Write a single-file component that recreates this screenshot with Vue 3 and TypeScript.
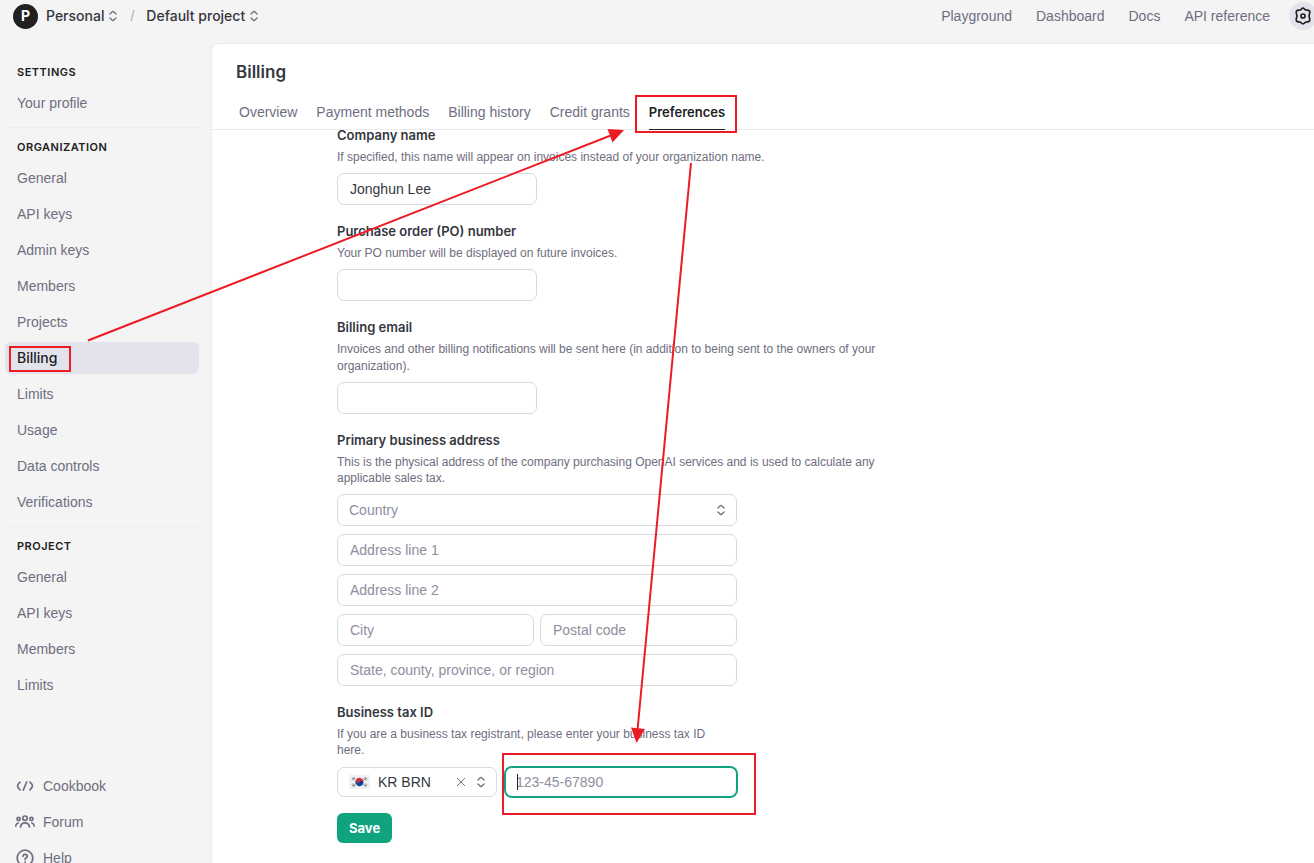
<script setup lang="ts">
import { ref } from 'vue'

interface NavSection {
  title: string
  items: string[]
}

const sections: NavSection[] = [
  { title: 'SETTINGS', items: ['Your profile'] },
  {
    title: 'ORGANIZATION',
    items: [
      'General', 'API keys', 'Admin keys', 'Members', 'Projects',
      'Billing', 'Limits', 'Usage', 'Data controls', 'Verifications',
    ],
  },
  { title: 'PROJECT', items: ['General', 'API keys', 'Members', 'Limits'] },
]

const topLinks: string[] = ['Playground', 'Dashboard', 'Docs', 'API reference']
const tabs: string[] = ['Overview', 'Payment methods', 'Billing history', 'Credit grants', 'Preferences']

const activeTab = ref('Preferences')
const company = ref('Jonghun Lee')
const poNumber = ref('')
const email = ref('')
const country = ref('')
const line1 = ref('')
const line2 = ref('')
const city = ref('')
const postal = ref('')
const region = ref('')
const taxType = ref('KR BRN')
const taxId = ref('')
</script>

<template>
  <div class="page">
    <header class="topbar">
      <span class="avatar">P</span>
      <button type="button" class="crumb">
        Personal
        <svg class="chev" viewBox="0 0 10 14"><path d="M2 5 4.300 2.700Q5 2 5.700 2.700L8 5M2 9 4.300 11.300Q5 12 5.700 11.300L8 9" /></svg>
      </button>
      <span class="slash">/</span>
      <button type="button" class="crumb">
        Default project
        <svg class="chev" viewBox="0 0 10 14"><path d="M2 5 4.300 2.700Q5 2 5.700 2.700L8 5M2 9 4.300 11.300Q5 12 5.700 11.300L8 9" /></svg>
      </button>
      <nav class="toplinks">
        <a v-for="link in topLinks" :key="link" href="#">{{ link }}</a>
      </nav>
      <button type="button" class="gear" aria-label="Settings">
        <svg viewBox="0 0 20 20">
          <path d="M8.500 3Q10 1.300 11.500 3Q12.600 4.400 14.300 4.200Q16.500 4 16.800 6.200Q16.900 7 16.500 7.800Q15.600 10 16.500 12.200Q16.900 13 16.800 13.800Q16.500 16 14.300 15.800Q12.600 15.600 11.500 17Q10 18.700 8.500 17Q7.400 15.600 5.700 15.800Q3.500 16 3.200 13.800Q3.100 13 3.500 12.200Q4.400 10 3.500 7.800Q3.100 7 3.200 6.200Q3.500 4 5.700 4.200Q7.400 4.400 8.500 3Z" />
          <circle cx="10" cy="10" r="2" />
        </svg>
      </button>
    </header>

    <div class="body">
      <aside class="sidebar">
        <section v-for="section in sections" :key="section.title" class="group">
          <h2>{{ section.title }}</h2>
          <nav>
            <a
              v-for="item in section.items"
              :key="item"
              href="#"
              :class="{ active: item === 'Billing' }"
            >{{ item }}</a>
          </nav>
        </section>
        <nav class="resources">
          <a href="#">
            <svg viewBox="0 0 20 20"><path d="M5 6.200Q2.500 8.500 2.500 10T5 13.800M15 6.200Q17.500 8.500 17.500 10T15 13.800M11.700 6 8.300 14" /></svg>
            Cookbook
          </a>
          <a href="#">
            <svg viewBox="0 0 20 20">
              <circle cx="10" cy="6.200" r="2.200" /><circle cx="3.600" cy="7" r="1.600" /><circle cx="16.400" cy="7" r="1.600" />
              <path d="M5.500 15c.4-2.600 2.100-4.200 4.500-4.200s4.100 1.600 4.500 4.200M.8 14c.1-1.600.9-2.800 2.400-3M19.200 14c-.1-1.600-.9-2.800-2.400-3" />
            </svg>
            Forum
          </a>
          <a href="#">
            <svg viewBox="0 0 20 20">
              <circle cx="10" cy="10" r="7.800" />
              <path d="M8 8.300c0-2.700 4.200-2.500 4.200 0 0 1.500-2.100 1.500-2.100 3.100M10.100 13.800v.2" />
            </svg>
            Help
          </a>
        </nav>
      </aside>

      <main class="panel">
        <div class="panel-head">
          <h1>Billing</h1>
          <div class="tabs" role="tablist">
            <button
              v-for="tab in tabs"
              :key="tab"
              type="button"
              role="tab"
              :aria-selected="tab === activeTab"
              :class="{ current: tab === activeTab }"
              @click="activeTab = tab"
            >{{ tab }}</button>
          </div>
        </div>

        <div class="scroll">
          <form class="form" @submit.prevent>
            <div class="field">
              <label for="company">Company name</label>
              <p>If specified, this name will appear on invoices instead of your organization name.</p>
              <input id="company" v-model="company" class="box short" type="text" />
            </div>
            <div class="field">
              <label for="po">Purchase order (PO) number</label>
              <p>Your PO number will be displayed on future invoices.</p>
              <input id="po" v-model="poNumber" class="box short" type="text" />
            </div>
            <div class="field">
              <label for="email">Billing email</label>
              <p>Invoices and other billing notifications will be sent here (in addition to being sent to the owners of your organization).</p>
              <input id="email" v-model="email" class="box short" type="email" />
            </div>
            <div class="field compact">
              <label for="country">Primary business address</label>
              <p>This is the physical address of the company purchasing OpenAI services and is used to calculate any applicable sales tax.</p>
              <div class="address">
                <div class="box picker">
                  <select id="country" v-model="country" class="empty">
                    <option value="">Country</option>
                  </select>
                  <svg class="chev" viewBox="0 0 10 14"><path d="M2 5 4.300 2.700Q5 2 5.700 2.700L8 5M2 9 4.300 11.300Q5 12 5.700 11.300L8 9" /></svg>
                </div>
                <input v-model="line1" class="box" type="text" placeholder="Address line 1" aria-label="Address line 1" />
                <input v-model="line2" class="box" type="text" placeholder="Address line 2" aria-label="Address line 2" />
                <div class="pair">
                  <input v-model="city" class="box" type="text" placeholder="City" aria-label="City" />
                  <input v-model="postal" class="box" type="text" placeholder="Postal code" aria-label="Postal code" />
                </div>
                <input v-model="region" class="box" type="text" placeholder="State, county, province, or region" aria-label="State, county, province, or region" />
              </div>
            </div>
            <div class="field compact tax">
              <label for="taxid">Business tax ID</label>
              <p>If you are a business tax registrant, please enter your business tax ID here.</p>
              <div class="taxrow">
                <div class="box picker type">
                  <svg class="flag" viewBox="0 0 21 14">
                    <rect width="21" height="14" fill="#f1f1f3" />
                    <g transform="rotate(25 10.500 7)">
                      <path d="M6.500 7a4 4 0 0 1 8 0z" fill="#cd2e3a" />
                      <path d="M6.500 7a4 4 0 0 0 8 0z" fill="#0047a0" />
                      <circle cx="8.500" cy="7" r="2" fill="#cd2e3a" />
                      <circle cx="12.500" cy="7" r="2" fill="#0047a0" />
                    </g>
                    <path d="M3 4.300 5 2.300M4.300 5.300l1.800-2M16 2.300l2 2M14.900 3.300l1.800 2M3 9.700l2 2M4.300 8.700l1.800 2M16 11.700l2-2M14.900 10.700l1.800-2" stroke="#333" stroke-width=".9" />
                  </svg>
                  <select v-model="taxType" aria-label="Tax ID type">
                    <option value="KR BRN">KR BRN</option>
                    <option value=""></option>
                  </select>
                  <button type="button" class="clear" aria-label="Clear" @click="taxType = ''">
                    <svg viewBox="0 0 10 10"><path d="M1 1l8 8M9 1 1 9" /></svg>
                  </button>
                  <svg class="chev" viewBox="0 0 10 14"><path d="M2 5 4.300 2.700Q5 2 5.700 2.700L8 5M2 9 4.300 11.300Q5 12 5.700 11.300L8 9" /></svg>
                </div>
                <div class="idwrap">
                  <input id="taxid" v-model="taxId" class="box focused" type="text" placeholder="123-45-67890" />
                  <span class="caret"></span>
                </div>
              </div>
            </div>
            <button type="submit" class="save">Save</button>
          </form>
        </div>
      </main>
    </div>

    <svg class="marks" aria-hidden="true">
      <g fill="none" stroke="#ed1c24" stroke-width="2">
        <rect x="10" y="347" width="60" height="24" />
        <rect x="636" y="96" width="100" height="36" />
        <rect x="503" y="754" width="252" height="60" />
        <path d="M88 340.500 612 135M691 163 637.500 730" />
      </g>
      <path d="M624 130 607.500 129 612.500 142.500ZM636.500 743 631 727.500 645 729Z" fill="#ed1c24" />
    </svg>
  </div>
</template>

<style>
body {
  background: #f4f4f4;
}
</style>

<style scoped>
.page {
  position: relative;
  display: flex;
  flex-direction: column;
  height: 100vh;
  overflow: hidden;
  background: #f4f4f4;
  color: #353740;
  font: 14px/20px "Liberation Sans", Arial, sans-serif;
}
.page * {
  box-sizing: border-box;
}
button, input, select {
  font: inherit;
  color: inherit;
}
button {
  padding: 0;
  border: 0;
  background: none;
}
a {
  color: #6e6e80;
  text-decoration: none;
}
svg {
  flex: none;
  fill: none;
}
.topbar {
  display: flex;
  align-items: center;
  flex: none;
  height: 43px;
  padding: 0 0 11px 13px;
}
.avatar {
  width: 25px;
  height: 25px;
  margin-right: 8px;
  border-radius: 50%;
  background: #202123;
  color: #fff;
  font-family: Inter, sans-serif;
  font-weight: 700;
  line-height: 24px;
  text-align: center;
}
.crumb {
  display: flex;
  align-items: center;
  gap: 4px;
  font-family: Inter, sans-serif;
  font-weight: 500;
}
.chev {
  width: 10px;
  height: 14px;
  stroke: #6e6e80;
  stroke-width: 1.3;
  stroke-linecap: round;
  stroke-linejoin: round;
}
.slash {
  margin: 0 12px;
  color: #acacbe;
}
.toplinks {
  display: flex;
  gap: 24px;
  margin-left: auto;
}
.gear {
  display: grid;
  place-items: center;
  width: 28px;
  height: 28px;
  margin: 0 -3px 0 19px;
  border-radius: 50%;
  background: #e3e3ec;
}
.gear svg {
  width: 20px;
  height: 20px;
  stroke: #202123;
  stroke-width: 1.7;
}
.body {
  display: flex;
  flex: 1;
  min-height: 0;
}
.sidebar {
  width: 211px;
  flex: none;
  padding: 3px 12px 0 5px;
}
.group {
  padding: 11px 0 8px;
  border-top: 1px solid #ececf1;
}
.group:first-child {
  padding-top: 17px;
  border-top-color: #f1f1f2;
}
.group h2 {
  margin: 0 0 7px;
  padding-left: 12px;
  color: #202123;
  font-family: Inter, sans-serif;
  font-size: 11px;
  font-weight: 600;
  line-height: 16px;
  letter-spacing: 0.5px;
}
.sidebar nav {
  display: flex;
  flex-direction: column;
  gap: 4px;
}
.sidebar nav a {
  display: flex;
  align-items: center;
  height: 32px;
  padding: 0 12px;
  border-radius: 6px;
}
.sidebar nav a.active {
  background: #e3e3ec;
  color: #202123;
  font-family: Inter, sans-serif;
  font-weight: 500;
}
.sidebar .resources {
  margin-top: 61px;
}
.sidebar .resources a {
  gap: 8px;
  padding-left: 10px;
}
.resources svg {
  width: 20px;
  height: 20px;
  stroke: #6e6e80;
  stroke-width: 1.7;
  stroke-linecap: round;
  stroke-linejoin: round;
}
.panel {
  display: flex;
  flex: 1;
  flex-direction: column;
  min-width: 0;
  border: solid #ececec;
  border-width: 1px 0 0 1px;
  border-radius: 8px 0 0 0;
  background: #fff;
}
.panel-head {
  padding: 16px 24px 0;
  border-bottom: 1px solid #ececec;
}
h1 {
  margin: 0 0 18px;
  font-family: Inter, sans-serif;
  font-size: 17px;
  font-weight: 600;
  line-height: 24px;
}
.tabs {
  display: flex;
  gap: 19px;
  height: 28px;
  margin-bottom: -1px;
  padding-left: 3px;
}
.tabs button {
  padding-bottom: 7px;
  border-bottom: 1px solid transparent;
  color: #6e6e80;
}
.tabs button.current {
  border-color: #202123;
  color: #202123;
  font-family: Inter, sans-serif;
  font-size: 13px;
  font-weight: 600;
}
.scroll {
  flex: 1;
  overflow: hidden;
}
.form {
  width: 852px;
  max-width: 100%;
  margin: -5px auto 0;
}
.field {
  width: 560px;
  margin-bottom: 16px;
}
.field.tax {
  width: 400px;
}
label {
  display: block;
  margin-bottom: 4px;
  font-family: Inter, sans-serif;
  font-size: 13px;
  font-weight: 600;
}
.field p {
  margin: 0 0 7px;
  color: #6e6e80;
  font-size: 12px;
  line-height: 17px;
}
.field.compact p {
  margin-bottom: 8px;
  line-height: 16px;
}
.field.tax p {
  padding-right: 16px;
}
.box {
  display: block;
  width: 100%;
  height: 32px;
  padding: 0 12px;
  border: 1px solid #d9d9e3;
  border-radius: 7px;
  outline: 0;
  background: #fff;
}
.box.short {
  width: 200px;
}
.box::placeholder {
  color: #8e8ea0;
  opacity: 1;
}
.picker {
  display: flex;
  align-items: center;
  padding: 0 10px 0 11px;
}
.picker select {
  flex: 1;
  min-width: 0;
  padding: 0;
  border: 0;
  outline: 0;
  appearance: none;
  background: none;
}
.picker select.empty {
  color: #8e8ea0;
}
.address {
  display: grid;
  gap: 8px;
  width: 400px;
}
.pair {
  display: flex;
  gap: 6px;
}
.taxrow {
  display: flex;
  align-items: center;
  gap: 8px;
  padding-top: 1px;
}
.picker.type {
  flex: none;
  width: 160px;
  height: 30px;
}
.flag {
  width: 21px;
  height: 14px;
  margin-right: 8px;
}
.clear {
  display: grid;
  margin-right: 10px;
}
.clear svg {
  width: 10px;
  height: 10px;
  stroke: #6e6e80;
  stroke-width: 1;
}
.idwrap {
  position: relative;
  flex: 1;
}
.box.focused {
  height: 30px;
  padding: 0 10px;
  border-color: #10a37f;
  box-shadow: 0 0 0 1px #10a37f;
  caret-color: transparent;
}
.caret {
  position: absolute;
  top: 7px;
  left: 12px;
  width: 1px;
  height: 16px;
  background: #202123;
}
.save {
  height: 30px;
  padding: 0 12px;
  border-radius: 6px;
  background: #10a37f;
  color: #fff;
  font-family: Inter, sans-serif;
  font-size: 13px;
  font-weight: 700;
}
.marks {
  position: absolute;
  inset: 0;
  width: 100%;
  height: 100%;
  pointer-events: none;
}
</style>
